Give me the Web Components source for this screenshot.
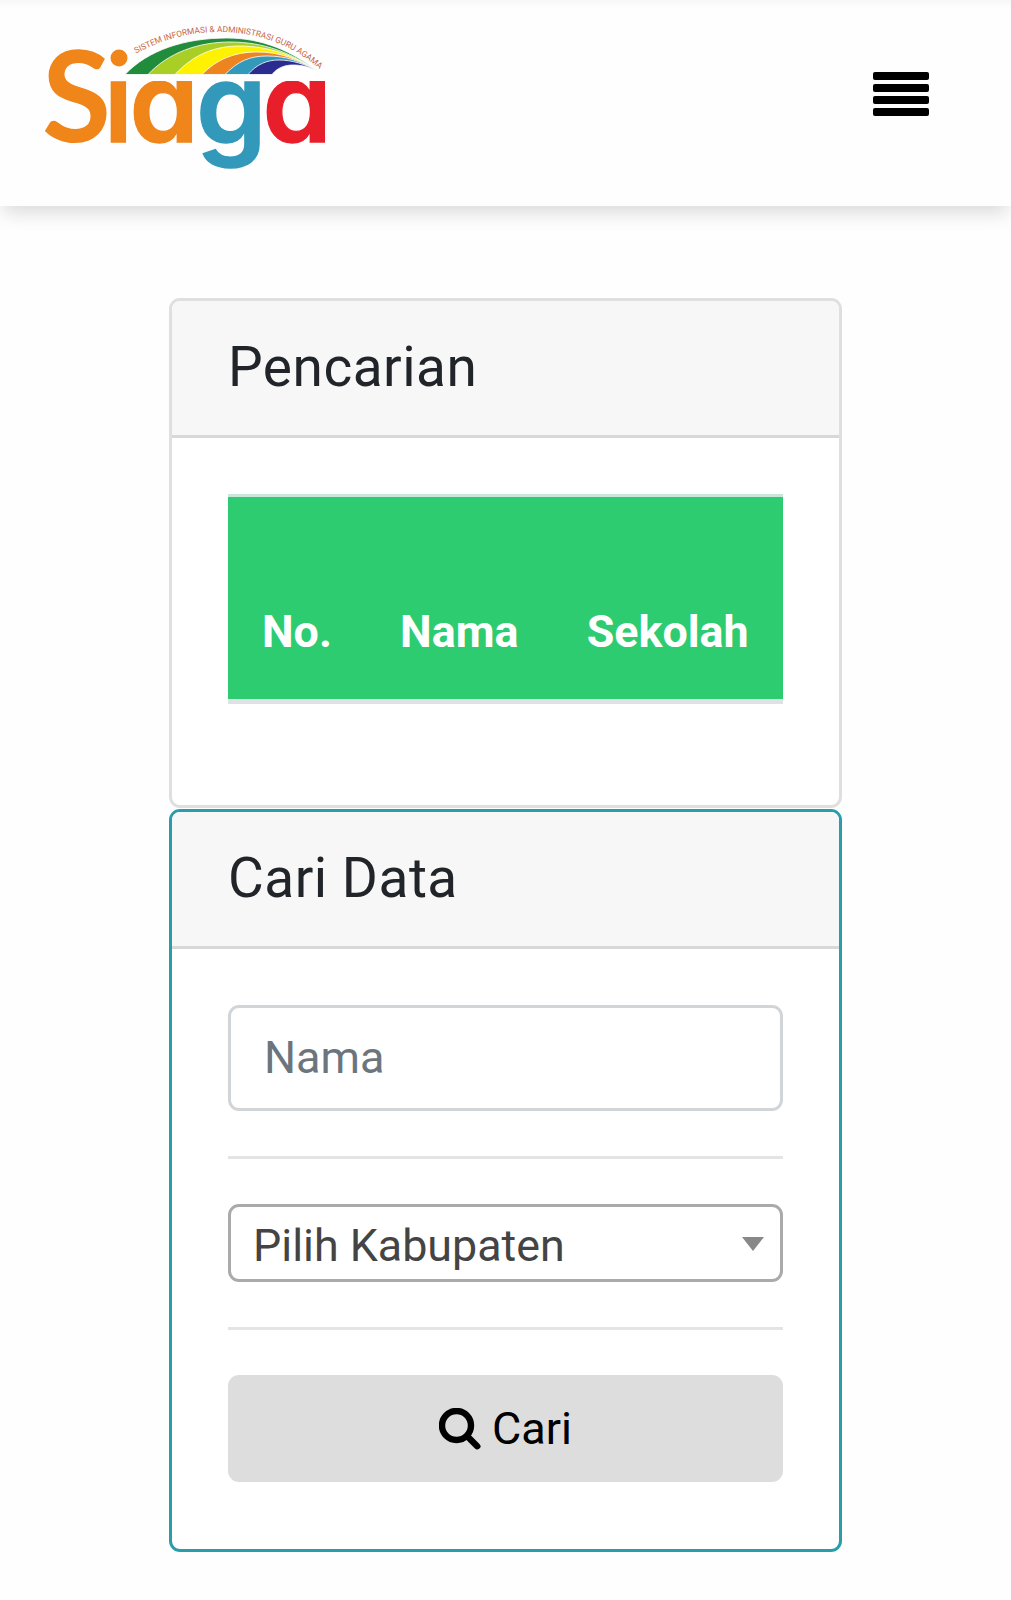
<!DOCTYPE html>
<html lang="id">
<head>
<meta charset="utf-8">
<title>Siaga</title>
<style>
	body {
		margin: 0;
		background: #fefefe;
		color: #212529;
		font-family: Roboto, "Liberation Sans", sans-serif;
		font-size: 45px;
		line-height: 1.5;
	}
	main {
		display: flex;
		flex-direction: column;
		gap: 1px;
		width: 673px;
		margin: 92px auto 0;
	}
</style>
</head>
<body>
<site-header></site-header>
<main>
	<data-card style="--card-height: 510px">
		<span slot="title">Pencarian</span>
		<result-table columns="No.,Nama,Sekolah"></result-table>
	</data-card>
	<data-card style="--card-height: 743px; --card-border: #2a9dab">
		<span slot="title">Cari Data</span>
		<search-form></search-form>
	</data-card>
</main>

<script>
	// attach an open shadow root filled with the given markup
	function render(el, html) {
		const template = document.createElement('template');
		template.innerHTML = html;
		el.attachShadow({ mode: 'open' });
		el.shadowRoot.appendChild(template.content.cloneNode(true));
	}

	class SiagaLogo extends HTMLElement {
		constructor() {
			super();
			render(this, `
				<style>
					:host { display: block; width: 300px; height: 160px; }
					svg { display: block; }
					.word { font-family: Inter, sans-serif; font-weight: 600; font-feature-settings: "cv11"; stroke-width: 1.4; }
					.word .cap { font-family: Lato, sans-serif; font-weight: 700; stroke-width: 0; }
					.o { fill: #f08519; stroke: #f08519; }
					.b { fill: #3399bb; stroke: #3399bb; }
					.r { fill: #e81f2b; stroke: #e81f2b; }
					.tagline { font-family: Roboto, sans-serif; font-size: 8.35px; fill: #c4644a; }
				</style>
				<svg width="300" height="160" viewBox="36 16 300 160" role="img" aria-label="Siaga">
					<defs>
						<path id="arc" d="M136 53.500C161 40 188 32 218 32C262 32 297 47 325 74"/>
						<clipPath id="nodot"><path d="M36 16H107V81H336V176H36Z"/></clipPath>
					</defs>
					<g stroke="#fff" stroke-width=".8">
						<path fill="#218c3c" d="M125 74.500C148 50 185 38 227 38C262 38 292 51 317 71V76H125Z"/>
						<path fill="#a9cf27" d="M148 74.500C168 53 198 42 230 42C264 42 292 53 317 71V76H148Z"/>
						<path fill="#fff200" d="M175 74.500C194 54 215 46 240 46C268 46 294 55 317 71V76H175Z"/>
						<path fill="#ee8420" d="M202 74.500C217 59 235 52 257 52C280 52 298 59 317 71V76H202Z"/>
						<path fill="#3399bb" d="M225 74.500C238 61 250 56 267 56C286 56 301 61 317 71V76H225Z"/>
						<path fill="#2b2c8f" d="M248 74.500C257 64 267 60 279 60C292 60 305 64 317 71V76H248Z"/>
						<path fill="#fff" d="M272 74.500C278 67 286 65 293 65C302 65 309 67 317 71V78H120V74.500Z"/>
					</g>
					<circle cx="119" cy="58" r="8.500" fill="#f08519"/>
					<text class="word" y="142" clip-path="url(#nodot)"><tspan class="cap o" x="42" font-size="126">S</tspan><tspan class="o" x="104" font-size="110">i</tspan><tspan class="o" x="129.500" font-size="111">a</tspan><tspan class="b" x="196" y="143.500" font-size="113">g</tspan><tspan class="r" x="262.500" y="142" font-size="111">a</tspan></text>
					<text class="tagline"><textPath href="#arc">SISTEM INFORMASI &amp; ADMINISTRASI GURU AGAMA</textPath></text>
				</svg>
			`);
		}
	}

	class SiteHeader extends HTMLElement {
		constructor() {
			super();
			render(this, `
				<style>
					:host {
						display: flex;
						justify-content: space-between;
						align-items: flex-start;
						box-sizing: border-box;
						height: 206px;
						padding: 16px 82px 0 36px;
						background: linear-gradient(#f7f7f7, #fefefe 8px);
						box-shadow: 0 10px 18px -3px rgba(0, 0, 0, .14);
					}
					button {
						display: flex;
						flex-direction: column;
						gap: 4px;
						margin: 56px 0 0;
						padding: 0;
						border: 0;
						background: none;
					}
					i { display: block; width: 56px; height: 8px; border-radius: 2px; background: #000; }
				</style>
				<siaga-logo></siaga-logo>
				<button aria-label="Menu"><i></i><i></i><i></i><i></i></button>
			`);
		}
	}

	class DataCard extends HTMLElement {
		constructor() {
			super();
			render(this, `
				<style>
					:host {
						display: block;
						box-sizing: border-box;
						height: var(--card-height);
						border: 3px solid var(--card-border, #dfdfdf);
						border-radius: 11px;
						background: #fff;
						overflow: hidden;
					}
					header {
						box-sizing: border-box;
						height: 137px;
						padding: 33px 56px 0;
						border-bottom: 3px solid #d8d8d8;
						background: #f7f7f7;
						font-size: 55px;
						line-height: 67px;
						letter-spacing: .5px;
					}
					.body { padding: 56px; }
				</style>
				<header><slot name="title"></slot></header>
				<div class="body"><slot></slot></div>
			`);
		}
	}

	class ResultTable extends HTMLElement {
		constructor() {
			super();
			const cells = this.getAttribute('columns').split(',').map(c => `<th>${c}</th>`).join('');
			render(this, `
				<style>
					:host { display: block; }
					table { width: 100%; border-collapse: separate; border-spacing: 0; }
					th {
						height: 168px;
						box-sizing: content-box;
						padding: 0 34px 34px;
						border-top: 3px solid #c9e6d8;
						border-bottom: 5px solid #dee2e6;
						background: #2ecc71;
						background-clip: padding-box;
						color: #fff;
						font-weight: 700;
						font-size: 44.800px;
						line-height: 67px;
						text-align: left;
						vertical-align: bottom;
					}
				</style>
				<table><thead><tr>${cells}</tr></thead></table>
			`);
		}
	}

	class SearchForm extends HTMLElement {
		constructor() {
			super();
			render(this, `
				<style>
					:host { display: block; }
					* { box-sizing: border-box; }
					input {
						display: block;
						width: 100%;
						height: 106px;
						padding: 0 33px 2px;
						border: 3px solid #d2d5d8;
						border-radius: 11px;
						background: #fff;
						font: inherit;
					}
					input::placeholder { color: #6c757d; opacity: 1; }
					hr { margin: 45px 0; border: 0; border-top: 3px solid #e4e4e4; }
					.select {
						display: flex;
						align-items: center;
						justify-content: space-between;
						height: 78px;
						padding: 5px 16px 0 22px;
						border: 3px solid #aaa;
						border-radius: 11px;
						background: #fff;
						color: #444;
						font-size: 44.800px;
					}
					.select svg { margin-top: -3px; }
					button {
						display: flex;
						align-items: center;
						justify-content: center;
						gap: 11px;
						width: 100%;
						height: 107px;
						padding: 0;
						border: 0;
						border-radius: 11px;
						background: #ddd;
						color: #000;
						font: inherit;
					}
				</style>
				<input type="text" placeholder="Nama">
				<hr>
				<div class="select" role="combobox">
					<span>Pilih Kabupaten</span>
					<svg width="22" height="14" viewBox="0 0 22 14"><path fill="#888" d="M0 0H22L11 14Z"/></svg>
				</div>
				<hr>
				<button>
					<svg width="42" height="42" viewBox="0 0 42 42" fill="none" stroke="#000">
						<circle cx="17.500" cy="17.500" r="14.500" stroke-width="6.400"/>
						<path d="M28.500 28.500L38.200 38.200" stroke-width="6.400" stroke-linecap="round"/>
					</svg>
					<span>Cari</span>
				</button>
			`);
		}
	}

	customElements.define('siaga-logo', SiagaLogo);
	customElements.define('site-header', SiteHeader);
	customElements.define('data-card', DataCard);
	customElements.define('result-table', ResultTable);
	customElements.define('search-form', SearchForm);
</script>
</body>
</html>
